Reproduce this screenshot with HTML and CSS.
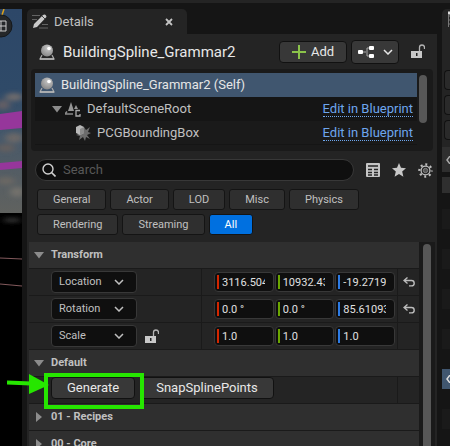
FILE: index.html
```html
<!DOCTYPE html>
<html lang="en">
<head>
<meta charset="utf-8">
<title>Details</title>
<link rel="stylesheet" href="styles.css">
</head>
<body>
<svg class="defs" aria-hidden="true">
  <defs>
    <radialGradient id="ball" cx=".6" cy=".3" r=".8"><stop offset="0" stop-color="#c8c8c8"/><stop offset="1" stop-color="#808080"/></radialGradient>
    <symbol id="actor" viewBox="0 0 16 16">
      <path d="M3 11 1 15h14l-2-4" fill="none" stroke="#aaa" stroke-width="1.2"/>
      <path d="M1 15h14" stroke="#bbb" stroke-width="1.5"/>
      <circle cx="8" cy="6.500" r="6" fill="url(#ball)"/>
      <circle cx="10" cy="4.500" r="1.800" fill="#fff"/>
    </symbol>
    <symbol id="lock" viewBox="0 0 14 15">
      <path d="M0 7h11v7H0z" fill="#c8c8c8"/>
      <path d="M8.500 7V3.500a2.500 2.500 0 0 1 5 0V5" fill="none" stroke="#b4b4b4" stroke-width="1.300"/>
      <path d="M5 9h1.500v3H5z" fill="#222"/>
    </symbol>
    <symbol id="chev" viewBox="0 0 10 6"><path d="m1 1 4 4 4-4" fill="none" stroke="currentColor" stroke-width="1.500"/></symbol>
    <symbol id="down" viewBox="0 0 10 7"><path d="M0 0h10L5 6.500z" fill="#8c8c8c"/></symbol>
    <symbol id="right" viewBox="0 0 10 10"><path d="M2 0l6 5-6 5z" fill="#8c8c8c"/></symbol>
    <symbol id="reset" viewBox="0 0 12 10"><path d="M4.500.5 1 3.500l3.500 3M1 3.500h7.500a2.700 2.700 0 0 1 0 5.400H6" fill="none" stroke="#bcbcbc" stroke-width="1.400"/></symbol>
  </defs>
</svg>
<div class="strip"></div>
<main class="desk">
  <svg class="viewport" viewBox="0 0 22 437" preserveAspectRatio="xMinYMin slice" aria-hidden="true">
    <defs>
      <linearGradient id="sky" x2="0" y2="1"><stop offset="0" stop-color="#2d4768"/><stop offset=".4" stop-color="#2f4a68"/><stop offset=".62" stop-color="#46586a"/><stop offset=".8" stop-color="#545d64"/><stop offset="1" stop-color="#60625f"/></linearGradient>
      <filter id="soft" x="-50%" y="-50%" width="200%" height="200%"><feGaussianBlur stdDeviation="3 2"/></filter>
    </defs>
    <rect width="22" height="437" fill="#000"/>
    <rect width="22" height="204" fill="url(#sky)"/>
    <g filter="url(#soft)">
      <ellipse cx="14" cy="88" rx="9" ry="4" fill="#6d6a6c"/><ellipse cx="3" cy="96" rx="7" ry="5" fill="#635f65"/>
      <ellipse cx="14" cy="129" rx="9" ry="5" fill="#6b6868"/><ellipse cx="6" cy="139" rx="9" ry="4" fill="#645f5e"/>
      <ellipse cx="6" cy="172" rx="9" ry="4" fill="#6b6864"/><ellipse cx="17" cy="183" rx="7" ry="5" fill="#73716c"/>
      <ellipse cx="12" cy="211" rx="9" ry="2" fill="#3b3b3b"/>
    </g>
    <path d="M0 105 22 102v17L0 121zM0 154l22-2v7l-22 2z" fill="#96369b"/>
    <path d="m0 249 22 1M0 275l22 2" stroke="#82595c"/>
    <path d="M4 0 0 12" stroke="#dda21b" stroke-width="1.500"/>
    <circle cx="1" cy="17" r="11" fill="#252729" stroke="#15181b"/>
    <path d="M-4 12h10v10H-4zM-4 17H6M1 12v10" fill="none" stroke="#ccc"/>
  </svg>

  <section class="details">
    <div class="tabs">
      <div class="tab">
        <svg width="16" height="16" viewBox="0 0 16 16" aria-hidden="true"><path d="M0 1.500h8M0 5.500h5M10 10.500h6M7 14h9" stroke="#646464"/><path d="m1 14 1-4 9-9q2-1 3 .5t0 2L5 13z" fill="#c9c9c9"/><path d="m10 2 3 3" stroke="#444"/></svg>
        <span>Details</span>
        <button class="plain close" aria-label="Close Details"><svg width="8" height="8" viewBox="0 0 8 8"><path d="m1 1 6 6m0-6L1 7" stroke="#c4c4c4" stroke-width="1.800"/></svg></button>
      </div>
    </div>
    <div class="panel">
      <header class="head">
        <svg width="16" height="16"><use href="#actor"/></svg>
        <h1>BuildingSpline_Grammar2</h1>
        <button class="btn add"><svg width="14" height="14" viewBox="0 0 14 14"><path d="M7 0v14M0 7h14" stroke="#8bc34a" stroke-width="2"/></svg>Add</button>
        <button class="btn graph" aria-label="Blueprint options">
          <svg width="17" height="12" viewBox="0 0 17 12"><path d="M4 6h4m5-4H9v8h4" fill="none" stroke="#aaa"/><rect y="4" width="5" height="4" rx="1" fill="#fff"/><rect x="11" width="5" height="4" rx="1" fill="#fff"/><rect x="11" y="8" width="5" height="4" rx="1" fill="#fff"/></svg>
          <svg width="10" height="6"><use href="#chev"/></svg>
        </button>
        <button class="plain" aria-label="Lock details"><svg width="14" height="15"><use href="#lock"/></svg></button>
      </header>

      <div class="tree">
        <ul>
          <li class="sel"><svg width="16" height="16"><use href="#actor"/></svg><span>BuildingSpline_Grammar2 (Self)</span></li>
          <li class="child"><svg width="10" height="7"><use href="#down"/></svg>
            <svg width="16" height="16" viewBox="0 0 16 16"><path d="m6 1 3 9H3zM11 4l2 4H9z" fill="#969696"/><path d="M2 10.500 0 13h8" fill="none" stroke="#8b8b8b" stroke-width="1.500"/><path d="M15 9.500h-4V15h4v-2" fill="none" stroke="#aaa" stroke-width="1.300"/></svg>
            <span>DefaultSceneRoot</span><a href="#">Edit in Blueprint</a></li>
          <li class="grandchild">
            <svg width="16" height="16" viewBox="0 0 16 16"><path d="m9 2 2 3 4-3-2 5 3 1-4 2 3 4-4-2-1 4-2-4-4 3 1-4-4-1 5-2z" fill="#6c6c6c"/><path d="m5 0 4 2v6L5 10 1 8V2z" fill="#b8b8b8"/><path d="M5 4v6l4-2V2z" fill="#8b8b8b"/></svg>
            <span>PCGBoundingBox</span><a href="#">Edit in Blueprint</a></li>
        </ul>
        <div class="thumb"></div>
      </div>

      <div class="searchrow">
        <label class="search"><svg width="14" height="14" viewBox="0 0 14 14"><circle cx="6" cy="6" r="5" fill="none" stroke="#d0d0d0" stroke-width="1.400"/><path d="m9.500 9.500 4 4" stroke="#d0d0d0" stroke-width="1.600"/></svg><input type="search" placeholder="Search" aria-label="Search"></label>
        <button class="plain" aria-label="Property matrix"><svg width="14" height="14" viewBox="0 0 14 14"><rect width="14" height="14" rx="1" fill="#c6c6c6"/><path d="M2 3h10M2 6.500h4M8 6.500h4M2 9.500h4M8 9.500h4M2 12h4M8 12h4" stroke="#252525" stroke-width="1.300"/></svg></button>
        <button class="plain" aria-label="Favorites"><svg width="14" height="14" viewBox="0 0 14 14"><path d="m7 0 2 4.800 5 .4-3.800 3.400 1.200 5.100L7 11l-4.400 2.700 1.200-5.100L0 5.200l5-.4z" fill="#c8c8c8"/></svg></button>
        <button class="plain" aria-label="Settings"><svg width="15" height="15" viewBox="0 0 16 16"><circle cx="8" cy="8" r="6.500" fill="none" stroke="#c0c0c0" stroke-width="2.400" stroke-dasharray="2.100 3.005" stroke-dashoffset="1"/><circle cx="8" cy="8" r="4.700" fill="none" stroke="#c0c0c0" stroke-width="1.300"/><circle cx="8" cy="8" r="2.300" fill="#555" stroke="#888"/></svg></button>
      </div>

      <div class="filters">
        <button>General</button><button>Actor</button><button>LOD</button><button>Misc</button><button>Physics</button>
        <button>Rendering</button><button>Streaming</button><button class="on">All</button>
      </div>

      <div class="scroller">
        <div class="props">
          <button class="group"><svg width="10" height="7"><use href="#down"/></svg>Transform</button>
          <div class="prop">
            <div class="name"><div class="drop"><select aria-label="Location mode"><option>Location</option></select><svg width="10" height="6"><use href="#chev"/></svg></div></div>
            <div class="vals"><input class="x" value="3116.504" aria-label="Location X"><input class="y" value="10932.43" aria-label="Location Y"><input class="z" value="-19.2719" aria-label="Location Z"></div>
            <div class="rst"><button class="plain" aria-label="Reset location"><svg width="12" height="10"><use href="#reset"/></svg></button></div>
          </div>
          <div class="prop">
            <div class="name"><div class="drop"><select aria-label="Rotation mode"><option>Rotation</option></select><svg width="10" height="6"><use href="#chev"/></svg></div></div>
            <div class="vals"><input class="x" value="0.0 °" aria-label="Rotation X"><input class="y" value="0.0 °" aria-label="Rotation Y"><input class="z" value="85.61093" aria-label="Rotation Z"></div>
            <div class="rst"><button class="plain" aria-label="Reset rotation"><svg width="12" height="10"><use href="#reset"/></svg></button></div>
          </div>
          <div class="prop">
            <div class="name"><div class="drop"><select aria-label="Scale mode"><option>Scale</option></select><svg width="10" height="6"><use href="#chev"/></svg></div><button class="plain" aria-label="Lock scale"><svg width="14" height="15"><use href="#lock"/></svg></button></div>
            <div class="vals"><input class="x" value="1.0" aria-label="Scale X"><input class="y" value="1.0" aria-label="Scale Y"><input class="z" value="1.0" aria-label="Scale Z"></div>
            <div class="rst"></div>
          </div>
          <button class="group"><svg width="10" height="7"><use href="#down"/></svg>Default</button>
          <div class="prop actions">
            <div class="acts">
              <div class="marked"><button class="btn">Generate</button><svg class="arrow" width="42" height="20" viewBox="0 0 42 20" aria-hidden="true"><path d="M0 8.500 24 9.500" stroke="#26e600" stroke-width="4"/><path d="m22 0 20 11-20 9z" fill="#26e600"/></svg></div>
              <button class="btn">SnapSplinePoints</button>
            </div>
            <div class="rst"></div>
          </div>
          <button class="group"><svg width="10" height="10"><use href="#right"/></svg>01 - Recipes</button>
          <button class="group"><svg width="10" height="10"><use href="#right"/></svg>00 - Core</button>
        </div>
        <div class="track"><div class="thumb"></div></div>
      </div>
    </div>
  </section>

  <aside class="side">
    <svg width="8" height="16" viewBox="0 0 8 16" aria-hidden="true"><path d="M6 5h2M6 9h2M6 13h2M6.500 4v12" stroke="#777"/><path d="M6 2h2" stroke="#ddd" stroke-width="3"/></svg>
    <div class="stubs"><i></i><i></i><i></i></div>
    <div class="cell bar"><svg width="4" height="8" viewBox="0 0 4 8"><path d="M4 0 1 4l3 4" fill="none" stroke="#aaa" stroke-width="1.500"/></svg></div>
    <div class="cell sub"></div>
    <div class="rows"><div class="cell"></div><div class="cell"></div><div class="cell"></div><div class="cell"></div><div class="cell"></div><div class="cell"></div><div class="cell"></div><div class="cell"></div><div class="cell pick"><svg width="4" height="8" viewBox="0 0 4 8"><path d="M4 0 1 4l3 4" fill="none" stroke="#ddd" stroke-width="1.500"/></svg></div><div class="cell"></div><div class="cell"></div><div class="cell"></div></div>
  </aside>
</main>
</body>
</html>
```
FILE: styles.css
```css
* { box-sizing: border-box; }
html, body { height: 100%; overflow: hidden; }
body { margin: 0; background: #151515; color: #c0c0c0; font: 13px/16px Roboto, sans-serif; display: flex; flex-direction: column; gap: 6px; }
svg { display: block; flex: none; }
button, input, select { font: inherit; color: inherit; margin: 0; }
.defs { position: absolute; width: 0; height: 0; }
.strip { height: 3px; flex: none; background: #242424; }
.desk { flex: 1; min-height: 0; display: grid; grid-template-columns: 22px minmax(0, 1fr) 13px; }
.viewport { width: 100%; height: 100%; }

.details { min-height: 0; display: flex; flex-direction: column; margin-left: 5px; }
.tab { display: flex; align-items: center; gap: 6px; width: 160px; height: 25px; padding: 0 14px 0 5px; background: #242424; border-radius: 5px 5px 0 0; }
.close { margin-left: auto; }
.plain { border: 0; padding: 0; background: none; }
.panel { flex: 1; min-height: 0; background: #242424; }
.head { display: flex; align-items: center; height: 35px; padding: 0 12px; }
h1 { flex: 1; margin: 0 0 0 8px; font-size: 15px; font-weight: 400; color: #e8e8e8; white-space: nowrap; }
.btn { height: 22px; padding: 0 15px; border: 1px solid #111; border-radius: 4px; background: #383838; color: #e8e8e8; display: flex; align-items: center; justify-content: center; white-space: nowrap; }
.add { width: 68px; gap: 5px; padding: 0; }
.graph { width: 48px; height: 24px; gap: 8px; padding: 0; margin: 0 12px 0 4px; }

.tree { display: flex; margin: 0 4px; padding: 4px; background: #1a1a1a; border-radius: 4px; height: 82px; gap: 2px; }
.tree ul { flex: 1; list-style: none; margin: 0; padding: 0; }
.tree li { display: flex; align-items: center; height: 24px; padding: 0 4px; gap: 6px; background: #151515; }
.tree li:last-child { background: #1a1a1a; border-bottom: 1px solid #151515; }
.tree li.sel { background: #40566f; color: #e6e6e6; }
.tree li.child { padding-left: 17px; gap: 3px; }
.child span { margin-left: 3px; }
.tree li.grandchild { padding-left: 40px; }
.tree a { margin-left: auto; color: #6ea6ee; text-decoration: none; line-height: 15px; border-bottom: 1px dotted #6ea6ee; }
.thumb { width: 8px; border-radius: 4px; background: #575757; }
.tree .thumb { height: 48px; margin: 2px 2px 0 0; }

.searchrow { display: flex; align-items: center; gap: 12px; margin: 8px 4px 0 8px; }
.search { flex: 1; display: flex; align-items: center; gap: 7px; height: 22px; padding: 0 6px; border: 1px solid #383838; border-radius: 11px; background: #0f0f0f; }
.search input { flex: 1; min-width: 0; border: 0; padding: 0; background: none; outline: 0; }
.search input::placeholder { color: #575757; opacity: 1; }
.filters { display: flex; flex-wrap: wrap; gap: 4px; padding: 8px 60px 7px 10px; font-size: 11px; }
.filters button { height: 21px; padding: 0 15px; border: 1px solid #141414; border-radius: 3px; background: #2f2f2f; }
.filters .on { background: #0070e0; color: #fff; }

.scroller { display: flex; margin: 0 2px; }
.props { flex: 1; min-width: 0; font-size: 11px; }
.group { display: flex; align-items: center; gap: 7px; width: 100%; height: 27px; padding: 0 5px; border: 0; border-bottom: 1px solid #1a1a1a; background: #2f2f2f; font-weight: 700; }
.prop { display: grid; grid-template-columns: 173px minmax(0, 1fr) 22px; height: 27px; border-bottom: 1px solid #1a1a1a; background: #242424; }
.actions { grid-template-columns: minmax(0, 1fr) 22px; }
.name { display: flex; align-items: center; gap: 8px; padding-left: 22px; border-right: 1px solid #1a1a1a; }
.drop { display: grid; width: 86px; }
.drop > * { grid-area: 1 / 1; }
.drop select { appearance: none; height: 22px; padding: 0 7px; border: 1px solid #383838; border-radius: 4px; background: #0f0f0f; }
.drop svg { align-self: center; justify-self: end; margin-right: 13px; pointer-events: none; }
.vals { display: grid; grid-template-columns: repeat(3, minmax(0, 1fr)); gap: 1px; align-items: center; padding: 0 2px 0 12px; }
.vals input { width: 100%; height: 20px; padding: 0 8px 0 7px; border: 1px solid #383838; border-radius: 4px; color: #e0e0e0; }
.x { background: linear-gradient(#d32600, #d32600) 2px 2px / 2px 14px no-repeat #0f0f0f; }
.y { background: linear-gradient(#6ba600, #6ba600) 2px 2px / 2px 14px no-repeat #0f0f0f; }
.z { background: linear-gradient(#2c7be5, #2c7be5) 2px 2px / 2px 14px no-repeat #0f0f0f; }
.rst { display: grid; place-items: center; border-left: 1px solid #1a1a1a; }
.acts { display: flex; gap: 5px; padding-left: 22px; font-size: 13px; }
.marked { position: relative; }
.marked::after { content: ""; position: absolute; inset: -4px -9px -6px -7px; border: 4px solid #26e600; }
.arrow { position: absolute; left: -44px; top: -3px; z-index: 1; }
.track { width: 16px; padding: 2px 4px 0; background: #1a1a1a; }
.track .thumb { height: 100%; }

.side { min-height: 0; margin-left: 5px; background: #151515; }
.side > svg { background: #242424; height: 20px; width: 8px; border-radius: 5px 0 0 0; }
.stubs { display: grid; gap: 5px; padding: 41px 0 7px 2px; background: #242424; }
.stubs i { height: 20px; border: 1px solid #111; border-right: 0; border-radius: 4px 0 0 4px; background: #2a2a2a; }
.cell { display: flex; align-items: center; justify-content: flex-end; height: 20px; }
.bar { height: 25px; background: #2f2f2f; }
.sub { height: 16px; margin-top: 5px; background: #2f2f2f; }
.rows { padding-top: 16px; }
.rows .cell:nth-child(odd) { background: #1a1a1a; }
.rows .pick:nth-child(odd) { background: #40566f; }
```
